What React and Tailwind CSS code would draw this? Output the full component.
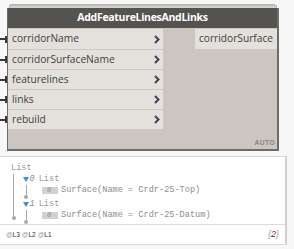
import React from "react";

const Chevron = () => (
  <svg width="6" height="9" viewBox="0 0 6 9" className="block">
    <path d="M1 1 L4.5 4.5 L1 8" stroke="#3b4553" strokeWidth="2" fill="none" />
  </svg>
);

const Port = () => (
  <div className="flex items-center w-[7px] h-[8px] -ml-[12px] shrink-0">
    <div className="w-[5px] h-[2px] bg-[#3a3a3a]" />
    <div className="w-[2px] h-[7px] bg-[#3a3a3a]" />
  </div>
);

const inputs = ["corridorName", "corridorSurfaceName", "featurelines", "links", "rebuild"];

function Row({ label, first }) {
  return (
    <div className={"flex items-center h-[20px] pl-[4px] pr-[3px] bg-[#e4e1dc] " + (first ? "" : "border-t border-[#cbc8c2]")}>
      <Port />
      <span className="flex-1 text-[10.2px] text-[#3e3e3e] ml-[5px]">{label}</span>
      <Chevron />
    </div>
  );
}

const Dot = () => <div className="w-[4px] h-[4px] rounded-full bg-[#a8a8a8] -ml-[1.5px]" />;

function Item({ idx, text }) {
  return (
    <div className="flex items-center h-[11px] pl-[14px]">
      <span className="w-[16px] h-[7px] bg-[#d2d2d2] text-[#8a8a8a] italic text-[7px] leading-[7px] pl-[5px]">{idx}</span>
      <span className="ml-[3px] text-[#8e8e8e]">{text}</span>
    </div>
  );
}

function Sub({ idx, text, lineH }) {
  return (
    <div className="flex flex-col">
      <div className="flex items-center h-[11px]">
        <svg width="6" height="5" viewBox="0 0 6 5" className="ml-[-1px]">
          <path d="M0 0 H6 L3 5 Z" fill="#3d8fd8" />
        </svg>
        <span className="italic text-[#8e8e8e] ml-[1px]">{idx}</span>
        <span className="ml-[4px] text-[#9a9a9a]">List</span>
      </div>
      <div className="flex">
        <div className="flex flex-col items-start ml-[2px]">
          <div className={"w-[1px] bg-[#a8a8a8] " + lineH} />
          <Dot />
        </div>
        <div>
          <Item idx="0" text={text} />
        </div>
      </div>
    </div>
  );
}

export default function App() {
  return (
    <div className="w-[294px] h-[249px] bg-[#f7f7f7] overflow-hidden" style={{ fontFamily: "'Open Sans', 'Liberation Sans', sans-serif" }}>
      <div className="relative ml-[7px] mt-[8px] w-[272px]">
        <div className="absolute left-[3px] right-[4px] -top-[4px] h-[6px] bg-[#dcdad6] border border-[#b9b7b3]" />
        <div className="absolute left-[2px] right-[2px] -top-[3px] h-[6px] bg-[#d4d2ce] border border-[#bdbbb7]" />
        <div className="relative border-l border-r-2 border-b-2 border-[#6e6c69] bg-[#cbc7c0]">
          <div className="h-[20px] bg-[#555350] flex items-center justify-center text-white font-bold text-[10.5px] tracking-[-0.3px]">
            AddFeatureLinesAndLinks
          </div>
          <div className="flex pt-[1px] h-[121px]">
            <div className="w-[155px] flex flex-col self-start">
              {inputs.map((l, i) => (
                <Row key={l} label={l} first={i === 0} />
              ))}
            </div>
            <div className="flex-1 flex flex-col items-end">
              <div className="w-[82px] h-[20px] bg-[#e4e1dc] flex items-center justify-end pr-[4px] text-[10.2px] text-[#3e3e3e]">
                corridorSurface
              </div>
              <div className="flex-1" />
              <div className="text-[7px] font-bold text-[#8d8a85] pr-[2px] pb-[1px] tracking-[0.2px]">AUTO</div>
            </div>
          </div>
        </div>
      </div>
      <div className="mt-[5px] w-[287px] h-[89px] bg-white border-t border-b border-r-2 border-t-[#d8d8d8] border-b-[#d8d8d8] border-r-[#cfcfcf] flex flex-col">
        <div className="flex-1 pl-[11px] pt-[6px] text-[8.6px] leading-[11px]" style={{ fontFamily: "'Liberation Mono', 'DejaVu Sans Mono', monospace" }}>
          <div className="text-[#9a9a9a] h-[11px]">List</div>
          <div className="flex">
            <div className="flex flex-col items-start ml-[2px]">
              <div className="w-[1px] h-[42px] bg-[#a8a8a8]" />
              <Dot />
            </div>
            <div className="ml-[8px]">
              <Sub idx="0" text="Surface(Name = Crdr-25-Top)" lineH="h-[10px]" />
              <Sub idx="1" text="Surface(Name = Crdr-25-Datum)" lineH="h-[10px]" />
            </div>
          </div>
        </div>
        <div className="h-[22px] border-t border-[#dcdcdc] flex items-center justify-between pl-[6px] pr-[6px]">
          <div className="text-[6.5px] flex gap-[2px]" style={{ fontFamily: "'Liberation Sans', sans-serif" }}>
            <span><span className="text-[#a0a0a0]">@</span><span className="text-[#333]">L3</span></span>
            <span><span className="text-[#a0a0a0]">@</span><span className="text-[#333]">L2</span></span>
            <span><span className="text-[#a0a0a0]">@</span><span className="text-[#333]">L1</span></span>
          </div>
          <div className="italic text-[9px]" style={{ fontFamily: "'Liberation Sans', sans-serif" }}>
            <span className="text-[#999]">{"{"}</span><span className="text-[#8b1a1a]">2</span><span className="text-[#999]">{"}"}</span>
          </div>
        </div>
      </div>
    </div>
  );
}
